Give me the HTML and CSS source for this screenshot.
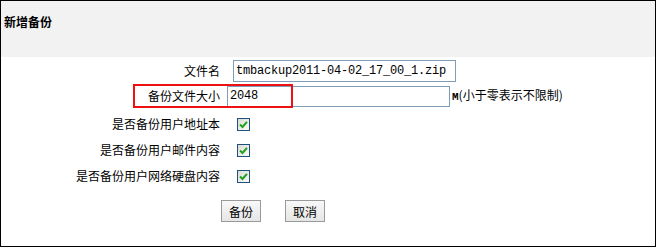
FILE: index.html
```html
<!DOCTYPE html>
<html lang="zh-CN">
<head>
  <meta charset="UTF-8">
  <title>新增备份</title>
  <link rel="stylesheet" href="styles.css">
</head>
<body>

<div class="box">
  <div class="title">新增备份</div>

  <div class="form">
    <div class="row r1">
      <label class="lbl">文件名</label>
      <input type="text" class="txt name" value="tmbackup2011-04-02_17_00_1.zip">
    </div>
    <div class="row r2">
      <label class="lbl">备份文件大小</label>
      <input type="text" class="txt size" value="2048">
      <span class="unit"><b>M</b>(小于零表示不限制)</span>
    </div>
    <div class="row chk">
      <label class="lbl">是否备份用户地址本</label>
      <span class="cb"><svg viewBox="0 0 11 11" width="11" height="11"><path d="M2 5.5 L4.5 8 L9 2.8" fill="none" stroke="#22a022" stroke-width="2"/></svg></span>
    </div>
    <div class="row chk">
      <label class="lbl">是否备份用户邮件内容</label>
      <span class="cb"><svg viewBox="0 0 11 11" width="11" height="11"><path d="M2 5.5 L4.5 8 L9 2.8" fill="none" stroke="#22a022" stroke-width="2"/></svg></span>
    </div>
    <div class="row chk">
      <label class="lbl">是否备份用户网络硬盘内容</label>
      <span class="cb"><svg viewBox="0 0 11 11" width="11" height="11"><path d="M2 5.5 L4.5 8 L9 2.8" fill="none" stroke="#22a022" stroke-width="2"/></svg></span>
    </div>

    <div class="botones">
      <button class="btn">备份</button>
      <button class="btn">取消</button>
    </div>
  </div>

  <!-- marca roja sobre el tamaño -->
  <div class="mark"></div>
</div>

</body>
</html>
```

FILE: styles.css
```css
* {
  box-sizing: border-box;
}

body {
  margin: 0;
  font-family: "Noto Sans CJK SC", "Liberation Sans", sans-serif;
  font-size: 12px;
  color: #000;
  background: #fff;
}

.box {
  position: relative;
  width: 656px;
  height: 247px;
  border: 1px solid #000;
}

.title {
  height: 56px;
  background: #f2f2f2;
  padding: 14px 0 0 3px;
  font-weight: bold;
  line-height: 14px;
}

.form {
  padding-top: 3px;
}

.row {
  display: flex;
  align-items: center;
}

.lbl {
  width: 219px;
  text-align: right;
  line-height: 14px;
}

.r1 {
  height: 22px;
}

.r2 {
  height: 24px;
  margin-top: 2px;
}

.chk {
  height: 26px;
}

.r2 + .chk {
  margin-top: 3px;
}

.txt {
  width: 223px;
  border: 1px solid #7f9db9;
  padding: 0 2px;
  font-family: "Liberation Mono", monospace;
  font-size: 12px;
  letter-spacing: -0.2px;
  color: #000;
  outline: none;
}

.name {
  height: 22px;
  margin-left: 13px;
}

.size {
  height: 21px;
  margin-left: 7px;
}

.unit {
  margin-left: 2px;
  line-height: 14px;
}

.unit b {
  font-family: "Liberation Mono", monospace;
  font-size: 11px;
}

.cb {
  width: 13px;
  height: 13px;
  margin-left: 17px;
  border: 1px solid #1c5180;
  background: linear-gradient(135deg, #dcdcd4, #fafaf8);
  display: flex;
  align-items: center;
  justify-content: center;
}

.botones {
  display: flex;
  gap: 24px;
  padding-left: 220px;
  margin-top: 11px;
}

.btn {
  height: 22px;
  width: 40px;
  padding: 0;
  border: 1px solid #9a9a9a;
  background: linear-gradient(#f8f8f8, #e6e6e6);
  font-family: "Noto Sans CJK SC", sans-serif;
  font-size: 12px;
  color: #000;
}

.mark {
  position: absolute;
  left: 132px;
  top: 83px;
  width: 160px;
  height: 24px;
  border: 2px solid #ee1111;
}
```
